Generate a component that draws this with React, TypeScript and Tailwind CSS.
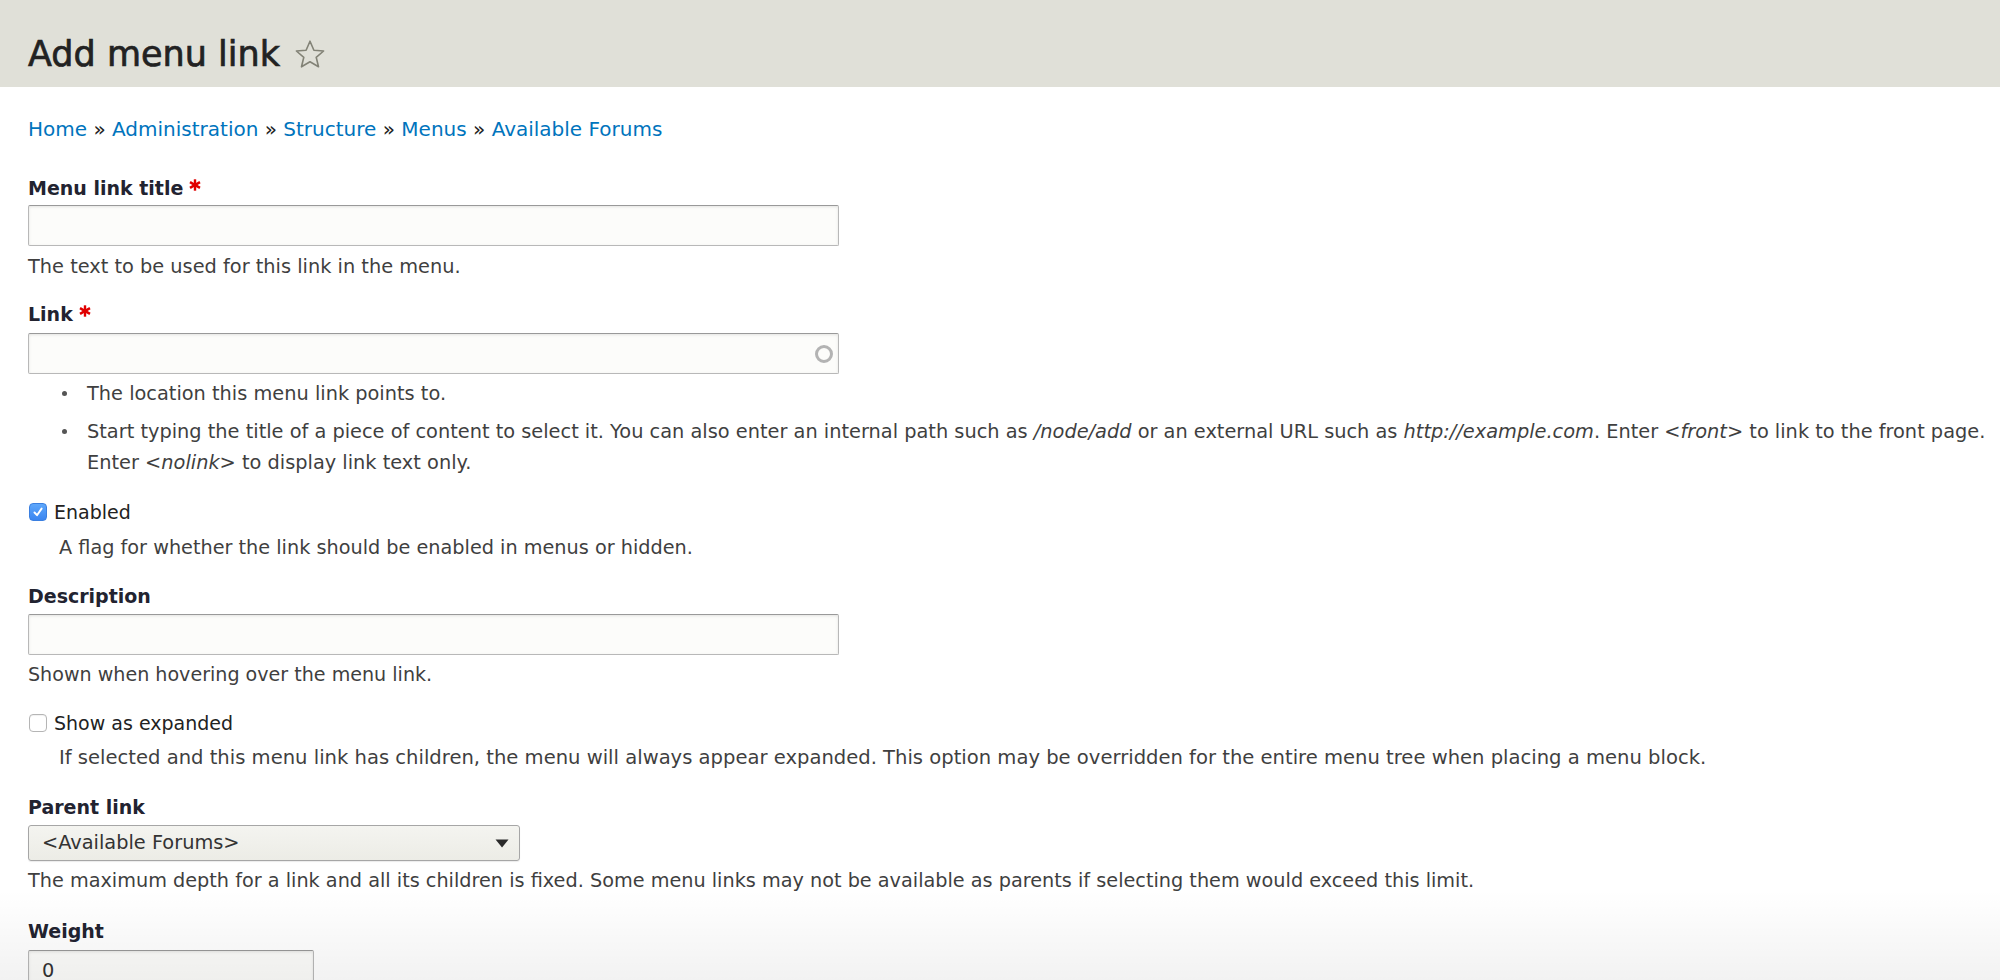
import React from "react";

function Req() {
  return (
    <svg width="12" height="12" viewBox="0 0 12 12" className="ml-[6px] mt-[5px] shrink-0">
      <g stroke="#e00000" strokeWidth="2.4">
        <line x1="6" y1="0.3" x2="6" y2="11.7" />
        <line x1="1" y1="3.1" x2="11" y2="8.9" />
        <line x1="1" y1="8.9" x2="11" y2="3.1" />
      </g>
    </svg>
  );
}

function Label({ children, req }: { children: React.ReactNode; req?: boolean }) {
  return (
    <div className="flex items-start font-bold text-[19px] text-[#222330] leading-[28px]">
      <span>{children}</span>
      {req ? <Req /> : null}
    </div>
  );
}

function TextInput({ w, children }: { w: string; children?: React.ReactNode }) {
  return (
    <div
      className={`${w} relative h-[41px] rounded-[2px] border border-[#b8b8b8] border-t-[#999] bg-[#fcfcfa] shadow-[inset_0_1px_3px_rgba(0,0,0,0.1)] flex items-center pl-[13px] text-[#333]`}
    >
      {children}
    </div>
  );
}

export default function App() {
  return (
    <div className="relative w-[2000px] h-[980px] overflow-hidden bg-white font-['DejaVu_Sans','Lucida_Grande',sans-serif] text-[19.35px] text-[#222330]">
      <header className="h-[87px] bg-[#e0e0d8] flex items-start pt-[32px] pl-[28px]">
        <h1 className="text-[35px] leading-[44px] font-normal text-[#222] [-webkit-text-stroke:0.7px_#222] flex items-center">
          <span>Add menu link</span>
          <svg width="32" height="31" viewBox="0 0 32 31" className="ml-[14px] mt-[1px]">
            <path
              d="M16 2.2 L19.9 11.3 L29.6 12 L22.2 18.3 L24.5 27.8 L16 22.7 L7.5 27.8 L9.8 18.3 L2.4 12 L12.1 11.3 Z"
              fill="none"
              stroke="#828276"
              strokeWidth="1.6"
              strokeLinejoin="round"
            />
          </svg>
        </h1>
      </header>

      <main className="pl-[28px]">
        <nav className="mt-[28px] leading-[28px] text-[20px] text-[#222]">
          <span className="text-[#0074bd]">Home</span> » <span className="text-[#0074bd]">Administration</span> »{" "}
          <span className="text-[#0074bd]">Structure</span> » <span className="text-[#0074bd]">Menus</span> »{" "}
          <span className="text-[#0074bd]">Available Forums</span>
        </nav>

        <div className="mt-[31px]">
          <Label req>Menu link title</Label>
          <div className="mt-[3px]">
            <TextInput w="w-[811px]" />
          </div>
          <div className="mt-[7px] leading-[28px] text-[#3f3f3f]">The text to be used for this link in the menu.</div>
        </div>

        <div className="mt-[19px]">
          <Label req>Link</Label>
          <div className="mt-[5px]">
            <TextInput w="w-[811px]">
              <span className="absolute right-[5px] top-[11px] w-[18px] h-[18px] rounded-full border-[3px] border-[#b3b3b3] blur-[0.4px]" />
            </TextInput>
          </div>
          <div className="mt-[4px] leading-[31px] text-[#3f3f3f]">
            <div className="flex">
              <span className="w-[5px] h-[5px] mt-[13px] ml-[34px] rounded-full bg-[#555] shrink-0" />
              <span className="ml-[20px]">The location this menu link points to.</span>
            </div>
            <div className="flex mt-[7px]">
              <span className="w-[5px] h-[5px] mt-[13px] ml-[34px] rounded-full bg-[#555] shrink-0" />
              <span className="ml-[20px] whitespace-nowrap">
                Start typing the title of a piece of content to select it. You can also enter an internal path such as{" "}
                <em>/node/add</em> or an external URL such as <em>http://example.com</em>. Enter <em>&lt;front&gt;</em> to
                link to the front page.
                <br />
                Enter <em>&lt;nolink&gt;</em> to display link text only.
              </span>
            </div>
          </div>
        </div>

        <div className="mt-[20px]">
          <div className="flex items-center leading-[28px] text-[19px] text-[#222]">
            <span className="w-[18px] h-[18px] ml-[1px] rounded-[4px] bg-linear-to-b from-[#5ea7fb] to-[#3a85f0] border border-[#3a7fe0] flex items-center justify-center">
              <svg width="12" height="12" viewBox="0 0 12 12">
                <path d="M2.5 6.5 L5 9.2 L9.6 2.6" fill="none" stroke="white" strokeWidth="1.9" strokeLinecap="round" strokeLinejoin="round" />
              </svg>
            </span>
            <span className="ml-[7px]">Enabled</span>
          </div>
          <div className="mt-[8px] pl-[31px] leading-[28px] text-[19.25px] text-[#3f3f3f]">
            A flag for whether the link should be enabled in menus or hidden.
          </div>
        </div>

        <div className="mt-[20px]">
          <Label>Description</Label>
          <div className="mt-[4px]">
            <TextInput w="w-[811px]" />
          </div>
          <div className="mt-[6px] leading-[28px] text-[19.1px] text-[#3f3f3f]">Shown when hovering over the menu link.</div>
        </div>

        <div className="mt-[20px]">
          <div className="flex items-center leading-[28px] text-[19px] text-[#222]">
            <span className="w-[18px] h-[18px] ml-[1px] rounded-[4px] bg-white border border-[#b5b5b5] shadow-[inset_0_1px_1px_rgba(0,0,0,0.06)]" />
            <span className="ml-[7px]">Show as expanded</span>
          </div>
          <div className="mt-[7px] pl-[31px] leading-[28px] text-[19.57px] text-[#3f3f3f]">
            If selected and this menu link has children, the menu will always appear expanded. This option may be
            overridden for the entire menu tree when placing a menu block.
          </div>
        </div>

        <div className="mt-[21px]">
          <Label>Parent link</Label>
          <div className="mt-[4px] w-[492px] h-[36px] rounded-[3px] border border-[#a6a6a6] bg-linear-to-b from-[#f4f4f0] to-[#ecece6] shadow-[0_1px_1px_rgba(0,0,0,0.08)] flex items-center justify-between pl-[13px] pr-[10px] text-[#333]">
            <span>&lt;Available Forums&gt;</span>
            <svg width="14" height="9" viewBox="0 0 14 9">
              <path d="M0.5 0.5 L13.5 0.5 L7 8.5 Z" fill="#2a2a2a" />
            </svg>
          </div>
          <div className="mt-[6px] leading-[28px] text-[19.25px] text-[#3f3f3f]">
            The maximum depth for a link and all its children is fixed. Some menu links may not be available as parents if
            selecting them would exceed this limit.
          </div>
        </div>

        <div className="mt-[22px]">
          <Label>Weight</Label>
          <div className="mt-[5px]">
            <TextInput w="w-[286px]">
              <span>0</span>
            </TextInput>
          </div>
        </div>
      </main>

      <div className="pointer-events-none absolute inset-x-0 bottom-0 h-[90px] bg-linear-to-b from-[rgba(0,0,0,0)] to-[rgba(0,0,0,0.05)]" />
    </div>
  );
}
